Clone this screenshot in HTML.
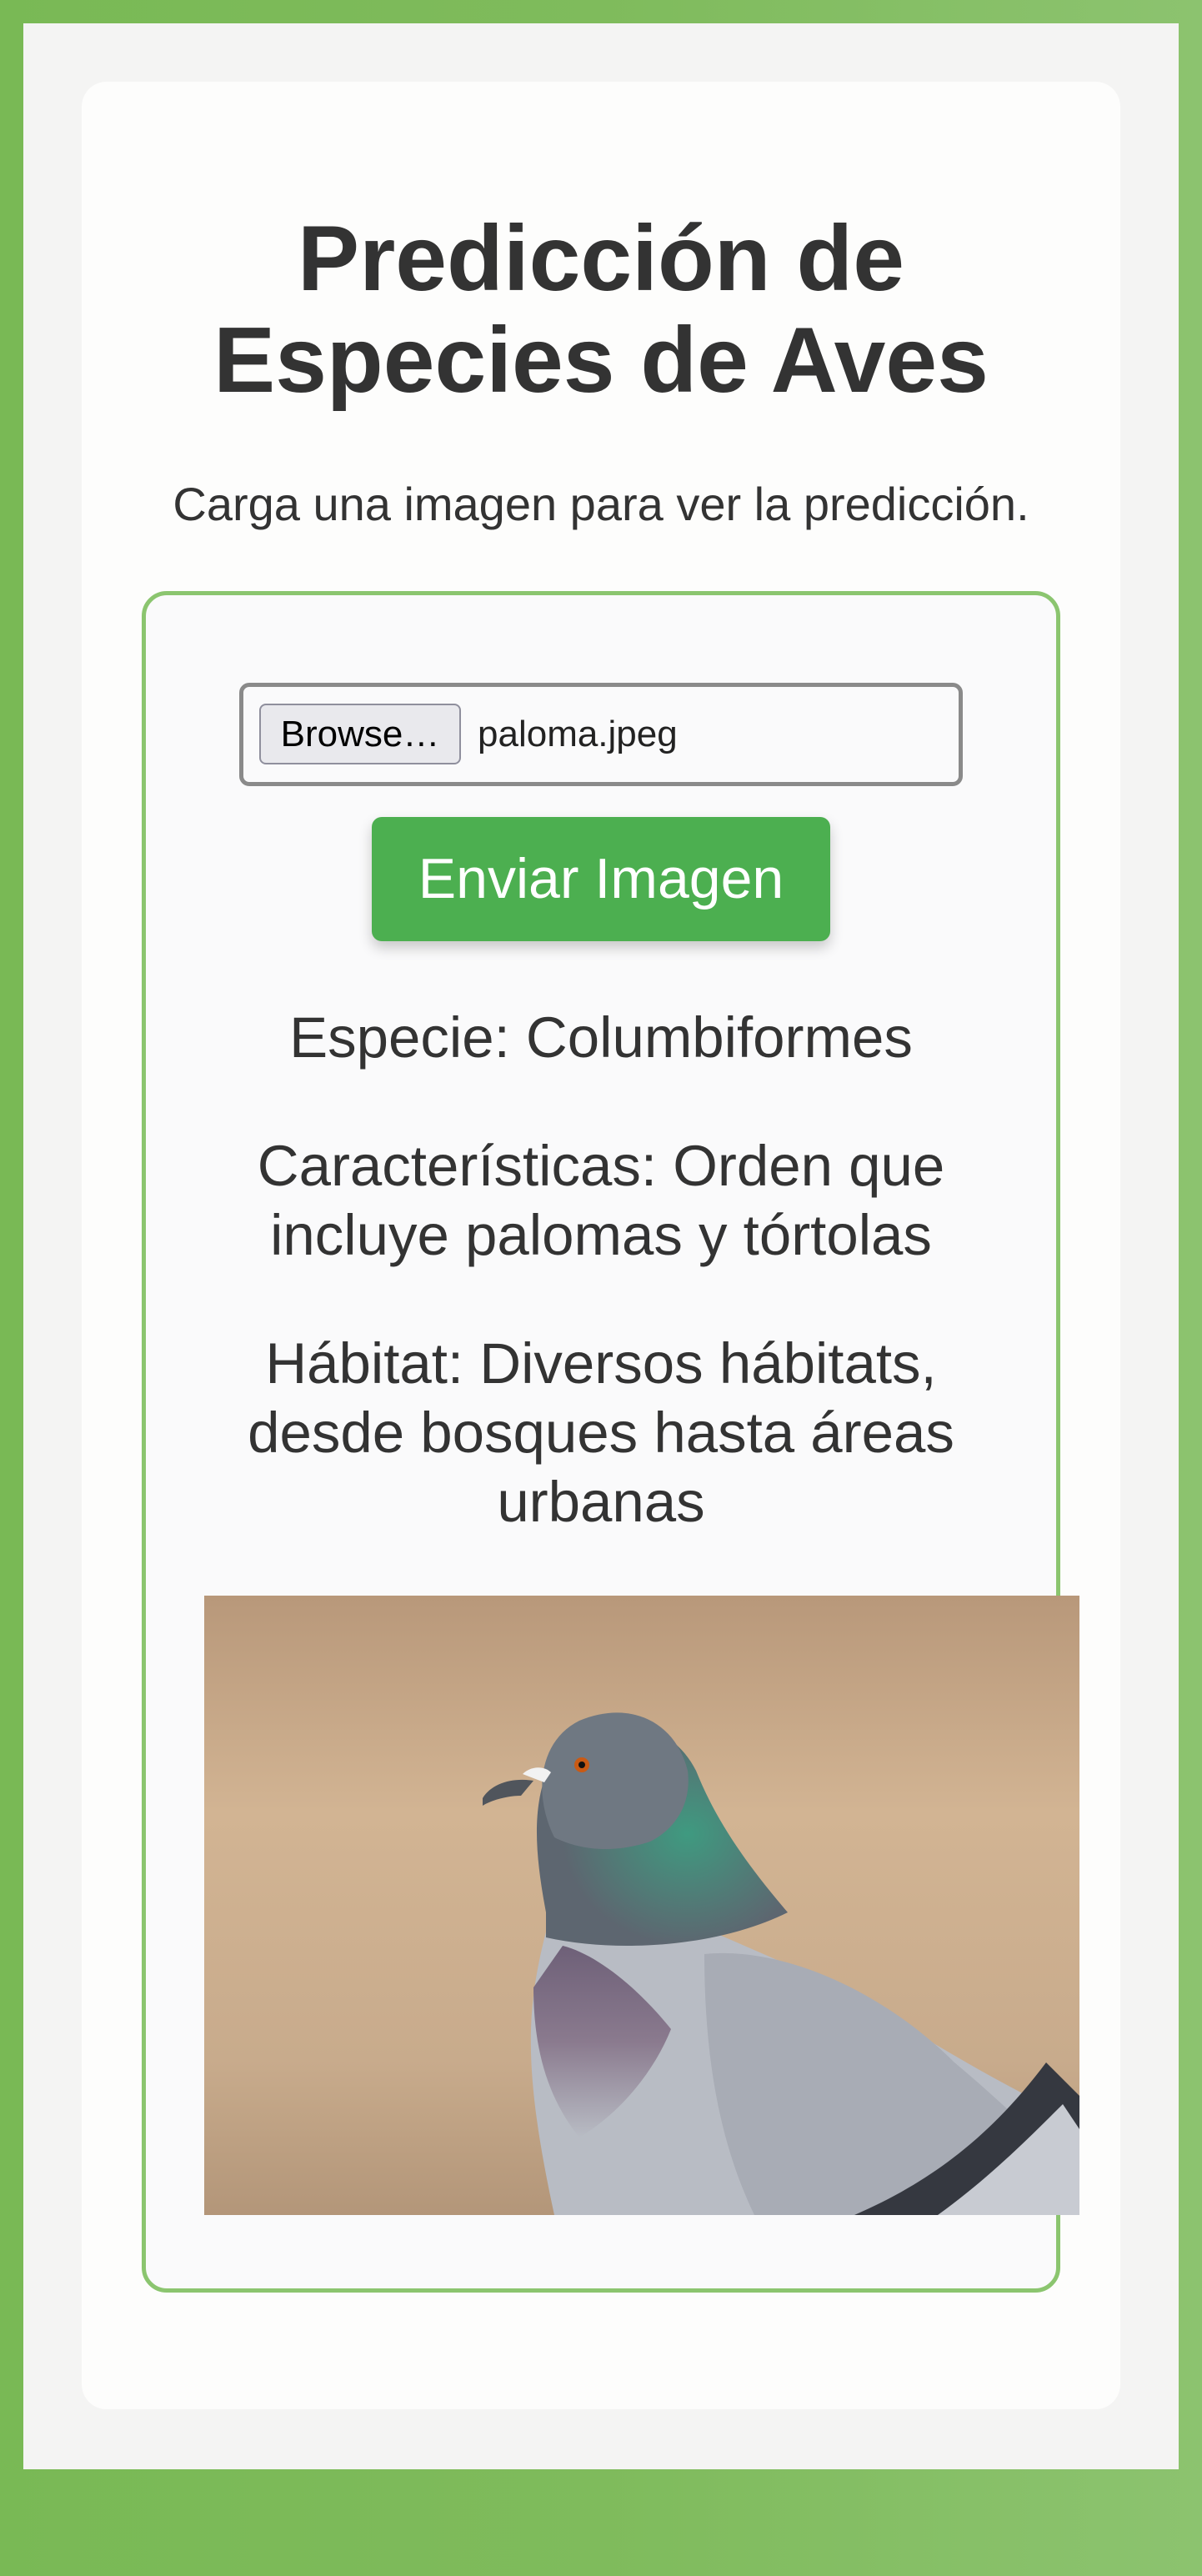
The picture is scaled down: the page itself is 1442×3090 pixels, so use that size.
<!DOCTYPE html>
<html><head><meta charset="utf-8"><style>
*{margin:0;padding:0;box-sizing:border-box}
html,body{width:1442px;height:3090px;overflow:hidden}
body{background:linear-gradient(90deg,#79b955 0%,#7fbb5c 50%,#8cc36f 100%);font-family:"Liberation Sans",Arial,sans-serif;color:#333;position:relative}
.panel{position:absolute;left:28px;top:28px;width:1386px;height:2934px;background:#f4f4f3}
.card{position:absolute;left:98px;top:98px;width:1246px;height:2792px;background:#fdfdfc;border-radius:30px}
.abs{position:absolute}
h1{position:absolute;left:98px;width:1246px;top:249px;text-align:center;font-size:111px;line-height:122px;font-weight:bold;color:#333}
.sub{left:98px;width:1246px;top:573px;text-align:center;font-size:56px;line-height:64px}
.box{left:170px;top:709px;width:1102px;height:2041px;border:5px solid #8bc56f;border-radius:30px;background:#fafafb}
.file{left:287px;top:819px;width:868px;height:124px;border:5px solid #8a8a8a;border-radius:12px;background:#fafafb}
.browse{left:311px;top:844px;width:242px;height:73px;border:2px solid #8f8f9d;border-radius:8px;background:#e9e9ed;font-size:44px;line-height:69px;text-align:center;color:#000}
.fname{left:573px;top:844px;font-size:44px;line-height:73px;color:#222}
.btn{left:446px;top:980px;width:550px;height:149px;background:#4caf50;border-radius:12px;box-shadow:0 8px 16px rgba(0,0,0,.2);color:#fff;font-size:68px;line-height:149px;text-align:center}
.res{left:150px;width:1142px;text-align:center;font-size:69px;line-height:83px;color:#333}
</style></head><body>
<div class="panel"></div>
<div class="card"></div>
<h1>Predicción de<br>Especies de Aves</h1>
<div class="abs sub">Carga una imagen para ver la predicción.</div>
<div class="abs box"></div>
<div class="abs file"></div>
<div class="abs browse">Browse…</div>
<div class="abs fname">paloma.jpeg</div>
<div class="abs btn">Enviar Imagen</div>
<div class="abs res" style="top:1203px">Especie: Columbiformes</div>
<div class="abs res" style="top:1357px">Características: Orden que<br>incluye palomas y tórtolas</div>
<div class="abs res" style="top:1594px">Hábitat: Diversos hábitats,<br>desde bosques hasta áreas<br>urbanas</div>
<svg class="abs" style="left:245px;top:1914px" width="1050" height="743" viewBox="0 0 1050 743">
<defs>
<linearGradient id="bg" x1="0" y1="0" x2="0" y2="1">
<stop offset="0" stop-color="#b8987a"/><stop offset=".35" stop-color="#d2b493"/><stop offset=".75" stop-color="#c8ab8c"/><stop offset="1" stop-color="#b39679"/></linearGradient>
<radialGradient id="neck" cx=".6" cy=".5" r=".5"><stop offset="0" stop-color="#3f9a80"/><stop offset="1" stop-color="#5d6670"/></radialGradient>
<linearGradient id="breast" x1="0" y1="0" x2="0" y2="1"><stop offset="0" stop-color="#6e6078"/><stop offset=".5" stop-color="#8a7a8e"/><stop offset="1" stop-color="#b8bcc4"/></linearGradient>
</defs>
<rect width="1050" height="743" fill="url(#bg)"/>
<path d="M420 743 C400 650 385 560 395 480 C400 440 410 400 420 370 L560 380 C620 410 700 440 780 480 C880 540 960 590 1050 630 L1050 743 Z" fill="#b8bcc4"/>
<path d="M395 470 C395 540 410 600 450 650 C500 620 540 570 560 520 C520 470 470 430 430 420 Z" fill="url(#breast)"/>
<path d="M600 430 C700 420 820 480 900 560 C960 610 1010 660 1050 700 L1050 743 L660 743 C620 660 600 560 600 430 Z" fill="#a8acb5"/>
<path d="M780 743 C880 700 950 640 1010 560 L1050 600 L1050 743 Z" fill="#353840"/>
<path d="M880 743 C940 700 990 650 1030 610 L1050 640 L1050 743 Z" fill="#c8cbd2"/>
<path d="M410 380 C395 300 390 230 430 180 C480 130 560 150 590 210 C610 260 640 310 700 380 C620 420 500 430 410 410 Z" fill="url(#neck)"/>
<path d="M420 290 C395 240 400 175 450 150 C510 125 565 150 580 210 C585 250 565 280 535 295 C490 310 450 305 420 290 Z" fill="#6f7882"/>
<circle cx="453" cy="203" r="9" fill="#c95a14"/>
<circle cx="453" cy="203" r="4" fill="#111"/>
<path d="M382 214 C392 204 408 204 416 212 L408 224 Z" fill="#f2f2f2"/>
<path d="M334 243 C345 225 370 218 395 222 L380 240 C365 240 345 245 334 252 Z" fill="#50555c"/>
</svg>
</body></html>
